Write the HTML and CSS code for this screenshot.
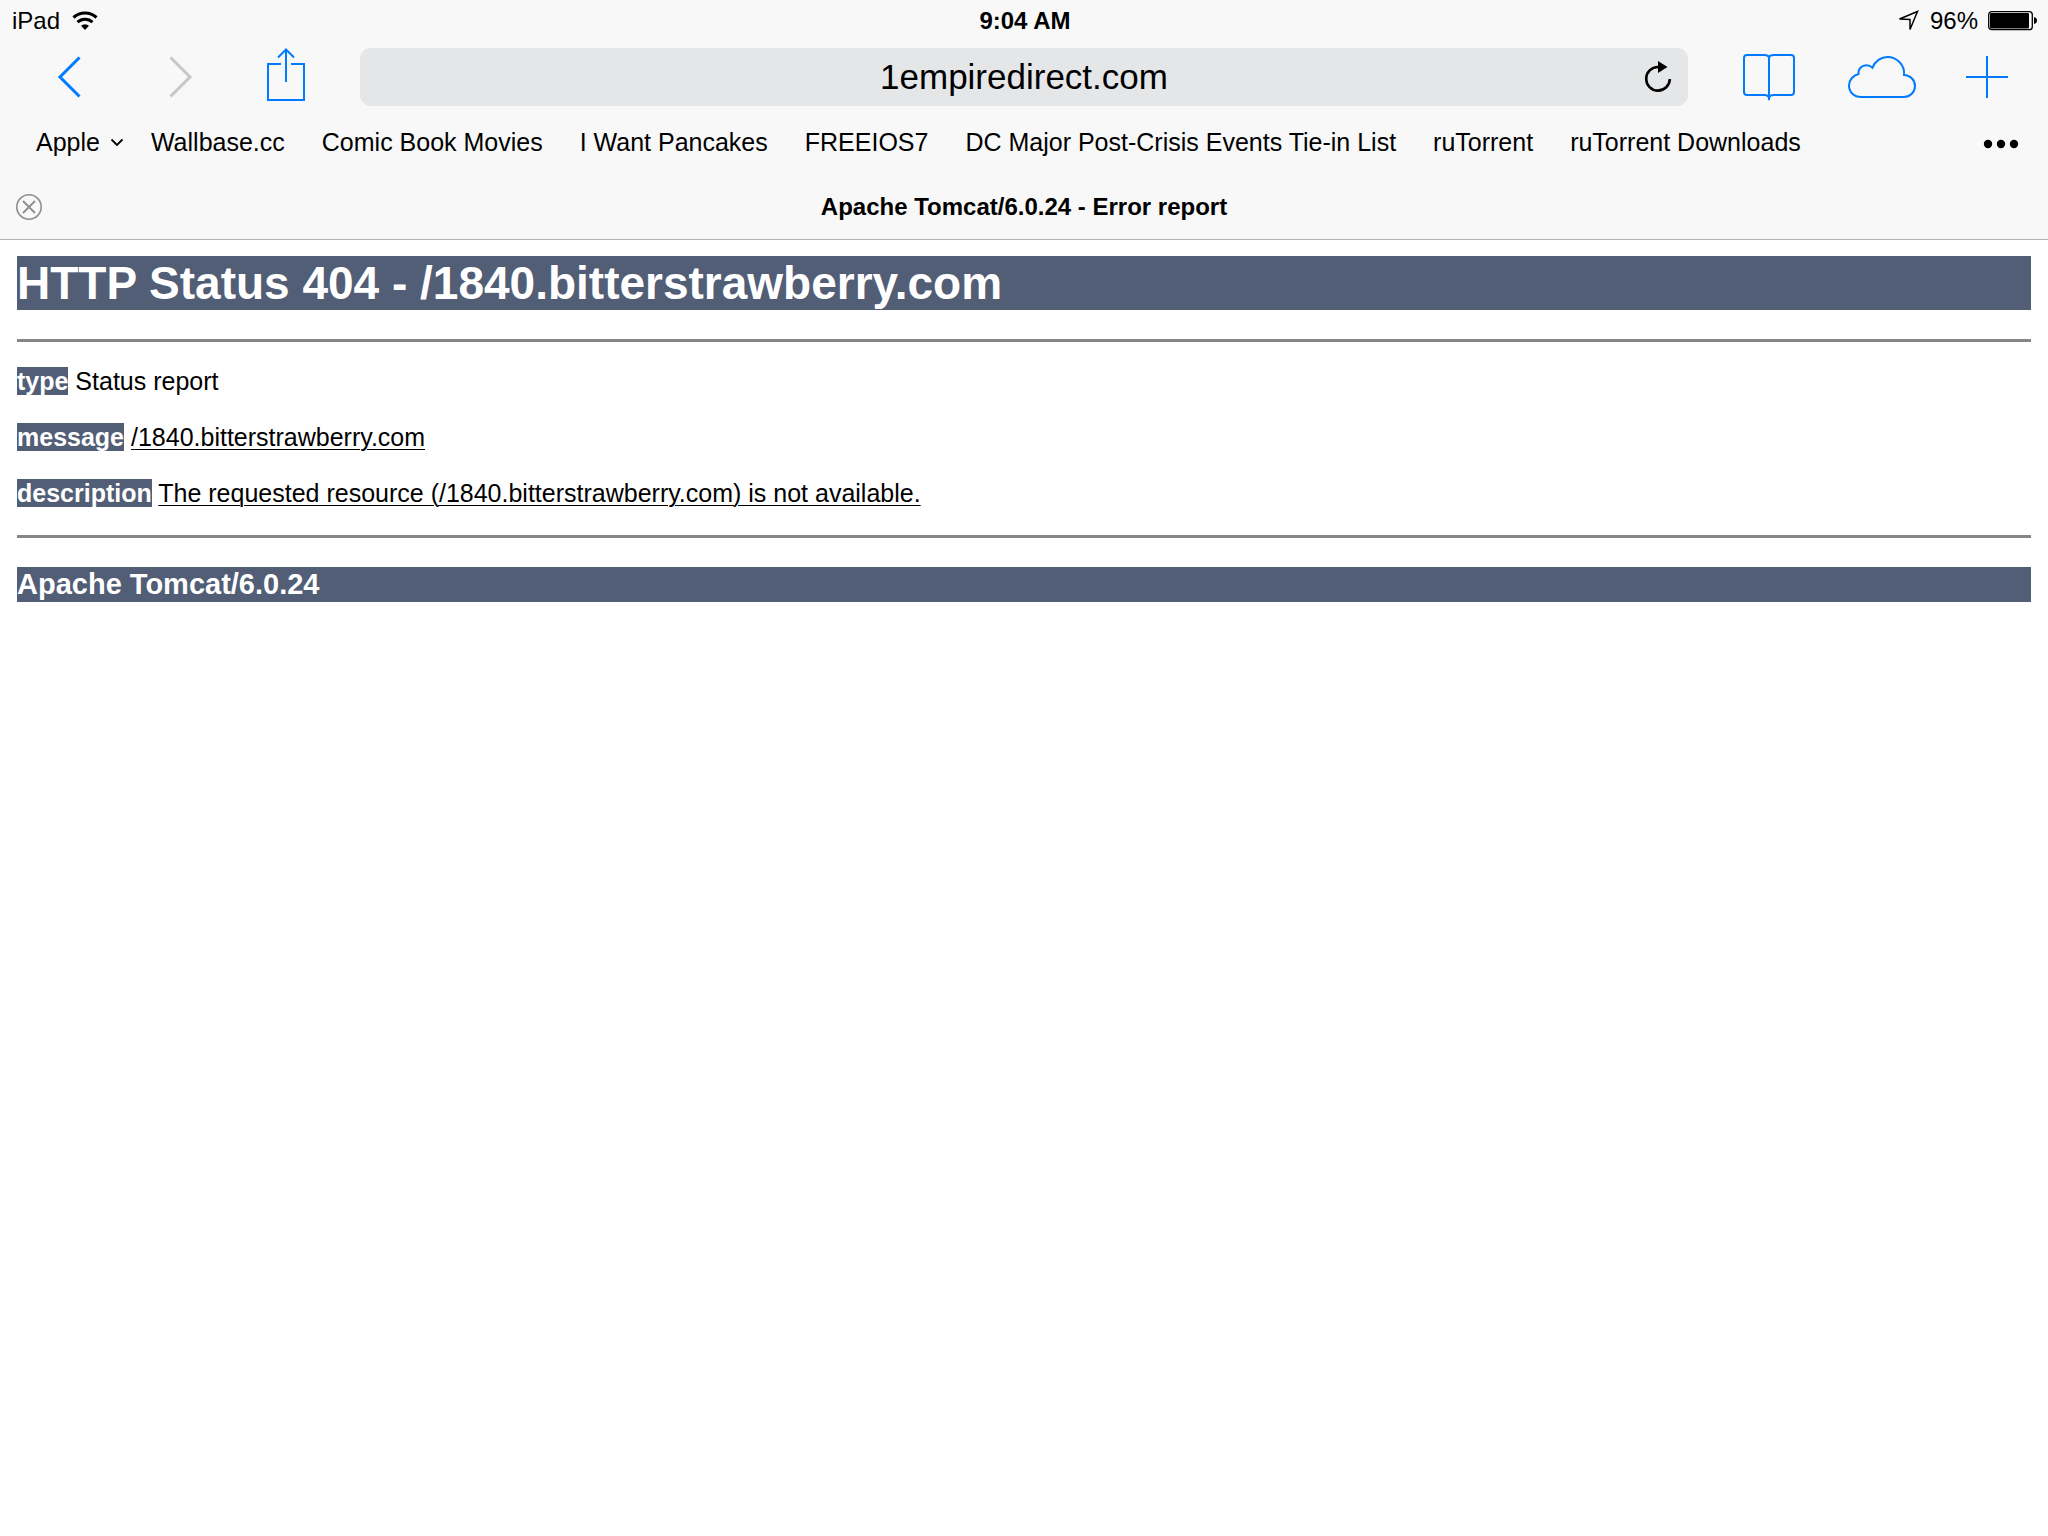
FILE: index.html
```html
<!DOCTYPE html>
<html lang="en">
<head>
    <meta charset="UTF-8">
    <meta name="viewport" content="width=device-width, initial-scale=1.0">
    <title>Apache Tomcat/6.0.24 - Error report</title>

    <link rel="stylesheet" href="styles.css">
</head>

<body>

<header class="browser">

    <div class="status-bar">
        <div class="status-left">
            <span>iPad</span>
            <svg width="26" height="20" viewBox="0 0 26 20" aria-hidden="true">
                <path d="M1.500 6.500 A17 17 0 0 1 24.500 6.500" fill="none" stroke="#000" stroke-width="3.200"/>
                <path d="M5.500 11.200 A11 11 0 0 1 20.500 11.200" fill="none" stroke="#000" stroke-width="3"/>
                <path d="M9 14.800 A6 6 0 0 1 17 14.800 L13 19 Z" fill="#000"/>
            </svg>
        </div>
        <div class="status-time">9:04 AM</div>
        <div class="status-right">
            <svg width="22" height="22" viewBox="0 0 22 22" aria-hidden="true">
                <path d="M19.500 1.500 L1.500 9 L12 9.500 V19.500 Z" fill="none" stroke="#000" stroke-width="1.500"/>
            </svg>
            <span class="battery-text">96%</span>
            <svg width="50" height="20" viewBox="0 0 50 20" aria-hidden="true">
                <rect x="0.700" y="0.700" width="43.600" height="18" rx="3" fill="none" stroke="#000" stroke-width="1.300"/>
                <rect x="2" y="2" width="39" height="15.500" rx="1" fill="#000"/>
                <path d="M46 6 C50 6.500 50 12.500 46 13 Z" fill="#000"/>
            </svg>
        </div>
    </div>

    <div class="toolbar">
        <button class="icon-btn back" type="button" aria-label="Back">
            <svg width="24" height="42" viewBox="0 0 24 42">
                <path d="M22.500 1.500 L3 21 L22.500 40.500" fill="none" stroke="#007aff" stroke-width="3"/>
            </svg>
        </button>
        <button class="icon-btn forward" type="button" aria-label="Forward" disabled>
            <svg width="24" height="42" viewBox="0 0 24 42">
                <path d="M1.500 1.500 L21 21 L1.500 40.500" fill="none" stroke="#c7c7c7" stroke-width="3"/>
            </svg>
        </button>
        <button class="icon-btn share" type="button" aria-label="Share">
            <svg width="40" height="58" viewBox="0 0 40 58">
                <path d="M15 16 H2 V52 H38 V16 H25 M20 34 V2 M12 9.500 L20 1.500 L28 9.500" fill="none" stroke="#007aff" stroke-width="2"/>
            </svg>
        </button>

        <form class="address">
            <input class="address-input" type="text" aria-label="Address" value="1empiredirect.com">
            <button class="icon-btn reload" type="button" aria-label="Reload">
                <svg width="28" height="32" viewBox="0 0 28 32">
                    <path d="M14 6 A11.800 11.800 0 1 0 25.800 18" fill="none" stroke="#000" stroke-width="2.600"/>
                    <path d="M14 0 L23.500 6 L14 12 Z" fill="#000"/>
                </svg>
            </button>
        </form>

        <button class="icon-btn" type="button" aria-label="Bookmarks">
            <svg width="54" height="48" viewBox="0 0 54 48">
                <path d="M27 47 V5 C27 3 25 2 22 2 H5 Q2 2 2 5 V39 Q2 42 5 42 H22 C25 42 27 43 27 45 C27 43 29 42 32 42 H49 Q52 42 52 39 V5 Q52 2 49 2 H32 C29 2 27 3 27 5" fill="none" stroke="#007aff" stroke-width="2"/>
                <path d="M25 42.500 L27 48 L29 42.500 Z" fill="#007aff"/>
            </svg>
        </button>
        <button class="icon-btn" type="button" aria-label="iCloud tabs">
            <svg width="70" height="44" viewBox="-2 0 70 44">
                <path d="M13 42 H56 A11 11 0 0 0 56 20 C57 10 49 2 39.500 2 C33 2 27 6 24.500 12.700 C19 7.500 10 11 10.500 19 C5 20.500 1 25 1 30.500 C1 37 6 42 13 42 Z" fill="none" stroke="#007aff" stroke-width="2"/>
            </svg>
        </button>
        <button class="icon-btn" type="button" aria-label="New tab">
            <svg width="42" height="42" viewBox="0 0 42 42">
                <path d="M21 0 V42 M0 21 H42" fill="none" stroke="#007aff" stroke-width="2"/>
            </svg>
        </button>
    </div>

    <nav class="bookmarks">
        <a class="folder" href="#">Apple
            <svg width="14" height="10" viewBox="0 0 14 10" aria-hidden="true">
                <path d="M1.500 2.500 L7 8 L12.500 2.500" fill="none" stroke="#000" stroke-width="1.800"/>
            </svg>
        </a>
        <a href="#">Wallbase.cc</a>
        <a href="#">Comic Book Movies</a>
        <a href="#">I Want Pancakes</a>
        <a href="#">FREEIOS7</a>
        <a href="#">DC Major Post-Crisis Events Tie-in List</a>
        <a href="#">ruTorrent</a>
        <a href="#">ruTorrent Downloads</a>
        <button class="icon-btn more" type="button" aria-label="More bookmarks">
            <svg width="36" height="10" viewBox="0 0 36 10">
                <circle cx="5" cy="5" r="4.200"/>
                <circle cx="18" cy="5" r="4.200"/>
                <circle cx="31" cy="5" r="4.200"/>
            </svg>
        </button>
    </nav>

    <div class="tab">
        <button class="icon-btn" type="button" aria-label="Close tab">
            <svg width="26" height="26" viewBox="0 0 26 26">
                <circle cx="13" cy="13" r="12.200" fill="none" stroke="#8e8e8e" stroke-width="1.600"/>
                <path d="M7 7 L19 19 M19 7 L7 19" stroke="#8e8e8e" stroke-width="1.800"/>
            </svg>
        </button>
        <span class="tab-title">Apache Tomcat/6.0.24 - Error report</span>
    </div>

</header>

<main class="page">
    <h1>HTTP Status 404 - /1840.bitterstrawberry.com</h1>
    <hr>
    <p><b>type</b> Status report</p>
    <p><b>message</b> <u>/1840.bitterstrawberry.com</u></p>
    <p><b>description</b> <u>The requested resource (/1840.bitterstrawberry.com) is not available.</u></p>
    <hr>
    <h3>Apache Tomcat/6.0.24</h3>
</main>

</body>
</html>
```
FILE: styles.css
```css
*{
    padding: 0;
    margin: 0;
    box-sizing: border-box;
}

body{
    background-color: #fff;
    color: #000;
    font-family: "Liberation Sans", Arial, Helvetica, sans-serif;
    font-size: 24px;
}

svg{
    display: block;
}

a{
    color: inherit;
    text-decoration: none;
}

/* browser bars */
.browser{
    background-color: #f8f8f8;
    border-bottom: 1px solid #b2b2b2;
}

.icon-btn{
    flex: none;
    border: none;
    background: none;
    cursor: pointer;
}

.status-bar{
    display: grid;
    grid-template-columns: 1fr auto 1fr;
    align-items: center;
    height: 40px;
    padding: 2px 10px 0 12px;
}

.status-left,
.status-right{
    display: flex;
    align-items: center;
    gap: 12px;
}

.status-right{
    justify-content: flex-end;
    gap: 10px;
}

.status-time{
    font-weight: bold;
}

.toolbar{
    display: flex;
    align-items: center;
    gap: 50px;
    height: 74px;
    padding: 0 40px 0 57px;
}

.forward{
    margin: 0 23px 0 38px;
}

.address{
    flex: 1;
    display: flex;
    align-items: center;
    position: relative;
    margin: 0 4px;
}

.address-input{
    width: 100%;
    height: 58px;
    border: none;
    border-radius: 11px;
    background-color: #e5e6e8;
    font-family: inherit;
    font-size: 35px;
    text-align: center;
}

/* sits over the right end of the address field */
.reload{
    position: absolute;
    right: 16px;
}

.bookmarks{
    display: flex;
    align-items: center;
    gap: 37px;
    height: 56px;
    padding: 0 29px 0 36px;
    font-size: 25px;
    white-space: nowrap;
}

.folder{
    display: flex;
    align-items: center;
    gap: 10px;
    margin-right: -10px;
}

.more{
    margin-left: auto;
    padding-top: 4px;
}

.tab{
    display: grid;
    grid-template-columns: 26px 1fr 26px;
    align-items: center;
    height: 69px;
    padding: 4px 16px 0;
}

.tab-title{
    font-weight: bold;
    text-align: center;
}

/* error page */
.page{
    padding: 16px 17px;
    font-size: 25px;
    line-height: 29px;
}

.page h1{
    background-color: #525d76;
    color: #fff;
    font-size: 46px;
    line-height: 54px;
}

.page hr{
    height: 3px;
    margin: 29px 0 25px;
    border: none;
    background-color: #858786;
}

.page p{
    margin-bottom: 27px;
}

.page p + hr{
    margin: 27px 0 29px;
}

.page b{
    background-color: #525d76;
    color: #fff;
}

.page u{
    text-decoration-thickness: 1px;
    text-underline-offset: 3px;
}

.page h3{
    background-color: #525d76;
    color: #fff;
    font-size: 29px;
    line-height: 35px;
}
```
